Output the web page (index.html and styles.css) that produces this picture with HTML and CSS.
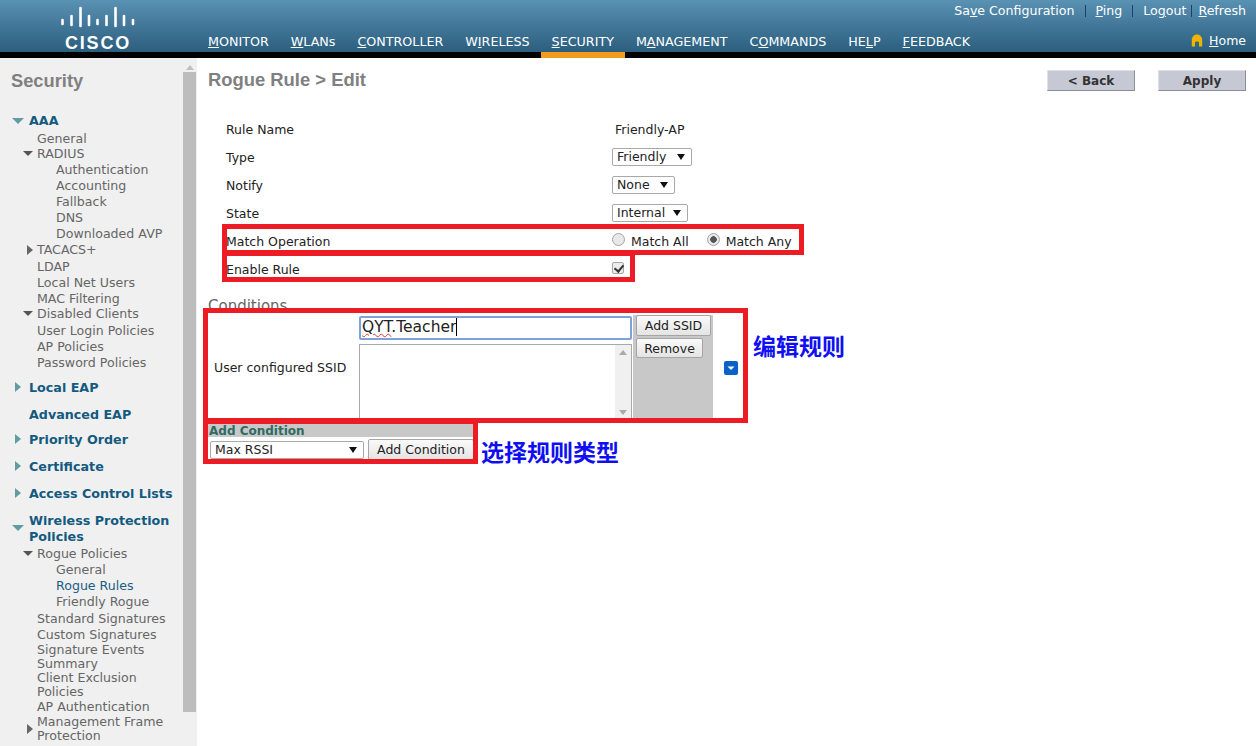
FILE: index.html
```html
<!DOCTYPE html>
<html lang="en">
<head>
    <meta charset="UTF-8">
    <title>Rogue Rule > Edit</title>
    <link rel="stylesheet" href="styles.css">
</head>
<body>

<header class="topbar">
    <div class="logo">
        <svg class="logo-bars" width="74" height="22" viewBox="0 0 74 22">
            <g stroke="#fff" stroke-width="2.6" stroke-linecap="round">
                <line x1="1.5" y1="14" x2="1.5" y2="18"/>
                <line x1="10.5" y1="10" x2="10.5" y2="19"/>
                <line x1="19.5" y1="2" x2="19.5" y2="20"/>
                <line x1="28" y1="10" x2="28" y2="19"/>
                <line x1="36.5" y1="14" x2="36.5" y2="18"/>
                <line x1="45.5" y1="10" x2="45.5" y2="19"/>
                <line x1="54.5" y1="2" x2="54.5" y2="20"/>
                <line x1="63" y1="10" x2="63" y2="19"/>
                <line x1="72" y1="14" x2="72" y2="18"/>
            </g>
        </svg>
        <div class="logo-text">CISCO</div>
    </div>
    <div class="top-right">
        <div class="top-links">
            <a>Sa<u>v</u>e Configuration</a><span class="sep sep-wide"></span>
            <a><u>P</u>ing</a><span class="sep sep-wide"></span>
            <a>Lo<u>g</u>out</a><span class="sep"></span>
            <a><u>R</u>efresh</a>
        </div>
    </div>
    <nav class="menu">
        <a><u>M</u>ONITOR</a>
        <a><u>W</u>LANs</a>
        <a><u>C</u>ONTROLLER</a>
        <a>W<u>I</u>RELESS</a>
        <a class="active"><u>S</u>ECURITY</a>
        <a>M<u>A</u>NAGEMENT</a>
        <a>C<u>O</u>MMANDS</a>
        <a>HE<u>L</u>P</a>
        <a><u>F</u>EEDBACK</a>
    </nav>
    <div class="home">
        <svg width="12" height="13" viewBox="0 0 12 13"><path d="M6 0.5C2.8 0.5 0.8 3 0.8 6V12.5H4V8.5C4 7.2 8 7.2 8 8.5V12.5H11.2V6C11.2 3 9.2 0.5 6 0.5Z" fill="#f0b400"/></svg>
        <a><u>H</u>ome</a>
    </div>
</header>
<div class="blackbar"></div>

<div class="page">
    <aside class="sidebar">
        <div class="side-scroll">
            <div class="scroll-up"></div>
            <div class="scroll-thumb"></div>
        </div>
        <h2 class="side-title">Security</h2>
        <ul class="tree">
            <li class="sec open h20 first">AAA</li>
            <li class="l1 h15">General</li>
            <li class="l1 down h16">RADIUS</li>
            <li class="l2">Authentication</li>
            <li class="l2">Accounting</li>
            <li class="l2">Fallback</li>
            <li class="l2">DNS</li>
            <li class="l2">Downloaded AVP</li>
            <li class="l1 right h17">TACACS+</li>
            <li class="l1">LDAP</li>
            <li class="l1">Local Net Users</li>
            <li class="l1 h15">MAC Filtering</li>
            <li class="l1 down h17">Disabled Clients</li>
            <li class="l1">User Login Policies</li>
            <li class="l1">AP Policies</li>
            <li class="l1">Password Policies</li>
            <li class="sec closed gap-a">Local EAP</li>
            <li class="sec gap-b">Advanced EAP</li>
            <li class="sec closed gap-c">Priority Order</li>
            <li class="sec closed gap-b">Certificate</li>
            <li class="sec closed gap-b">Access Control Lists</li>
            <li class="sec open gap-b wrap">Wireless Protection<br>Policies</li>
            <li class="l1 down">Rogue Policies</li>
            <li class="l2">General</li>
            <li class="l2 current">Rogue Rules</li>
            <li class="l2 h17">Friendly Rogue</li>
            <li class="l1 h16">Standard Signatures</li>
            <li class="l1 h16">Custom Signatures</li>
            <li class="l1 tight">Signature Events<br>Summary</li>
            <li class="l1 tight">Client Exclusion<br>Policies</li>
            <li class="l1 h16">AP Authentication</li>
            <li class="l1 right tight">Management Frame<br>Protection</li>
        </ul>
    </aside>

    <main class="content">
        <div class="title-row">
            <h1>Rogue Rule &gt; Edit</h1>
            <div class="actions">
                <button class="flat-btn">&lt; Back</button>
                <button class="flat-btn">Apply</button>
            </div>
        </div>

        <div class="form">
            <div class="row"><label>Rule Name</label><span class="value-text">Friendly-AP</span></div>
            <div class="row"><label>Type</label><span class="fake-select w80">Friendly</span></div>
            <div class="row"><label>Notify</label><span class="fake-select w63">None</span></div>
            <div class="row"><label>State</label><span class="fake-select w76">Internal</span></div>
            <div class="row">
                <label>Match Operation</label>
                <span class="radios">
                    <i class="radio"></i><span class="radio-label">Match All</span>
                    <i class="radio on"></i><span class="radio-label">Match Any</span>
                </span>
            </div>
            <div class="row"><label>Enable Rule</label><i class="check"></i></div>
        </div>

        <h3 class="cond-title">Conditions</h3>
        <div class="cond">
            <div class="cond-label">User configured SSID</div>
            <div class="cond-inputs">
                <div class="ssid-input"><span class="squiggle">QYT</span>.Teacher<span class="caret"></span></div>
                <div class="ssid-list">
                    <div class="list-scroll"><b class="arrow-up"></b><b class="arrow-down"></b></div>
                </div>
            </div>
            <div class="cond-buttons">
                <button class="btn btn-ssid">Add SSID</button>
                <button class="btn btn-remove">Remove</button>
            </div>
            <div class="cond-extra">
                <svg width="14" height="14" viewBox="0 0 14 14"><rect width="14" height="14" rx="2" fill="#0a62c8"/><path d="M3.5 5.5H10.5L7 9Z" fill="#fff"/></svg>
            </div>
        </div>

        <div class="add-cond">
            <div class="add-head">Add Condition</div>
            <div class="add-body">
                <span class="fake-select w154">Max RSSI</span>
                <button class="btn btn-add">Add Condition</button>
            </div>
        </div>

        <!-- red annotation boxes and notes drawn over the form -->
        <div class="mark mark-match"></div>
        <div class="mark mark-enable"></div>
        <div class="mark mark-cond"></div>
        <div class="mark mark-add"></div>
        <div class="note note-edit">编辑规则</div>
        <div class="note note-type">选择规则类型</div>
    </main>
</div>

</body>
</html>
```

FILE: styles.css
```css
* {
    box-sizing: border-box;
}

html, body {
    height: 100%;
}

body {
    margin: 0;
    height: 746px;
    overflow: hidden;
    background: #fff;
    font-family: "DejaVu Sans", Verdana, sans-serif;
    font-size: 12.5px;
    color: #333;
}

ul {
    list-style: none;
    margin: 0;
    padding: 0;
}

/* top bar */
.topbar {
    position: relative;
    height: 52px;
    background: linear-gradient(180deg, #5a92b4 0%, #44799b 45%, #2c5f7e 100%);
    color: #fff;
}

.blackbar {
    height: 6px;
    background: #000;
}

.logo {
    position: absolute;
    left: 61px;
    top: 6px;
    width: 74px;
    text-align: center;
}

.logo-bars {
    display: block;
}

.logo-text {
    font-family: "Liberation Sans", Arial, sans-serif;
    font-weight: bold;
    font-size: 18px;
    letter-spacing: 1.8px;
    line-height: 18px;
    margin-top: 6px;
}

.top-right {
    position: absolute;
    right: 10px;
    top: 3px;
}

.top-links {
    display: flex;
    align-items: center;
    height: 15px;
    font-size: 12.6px;
}

.sep {
    display: block;
    width: 1px;
    height: 12px;
    margin: 0 6px 0 5px;
    background: #1d3f6e;
}

.sep-wide {
    margin: 0 10px;
}

.menu {
    position: absolute;
    left: 197px;
    bottom: -6px;
    display: flex;
    height: 26px;
    font-size: 12.7px;
}

.menu a {
    padding: 2px 11px 0;
    height: 26px;
    line-height: 15px;
    white-space: nowrap;
}

.menu a.active {
    background: linear-gradient(180deg, transparent 0, transparent 20px, #f39b1f 20px, #f39b1f 26px);
}

.home {
    position: absolute;
    right: 10px;
    top: 33px;
    display: flex;
    align-items: center;
    gap: 6px;
}

/* sidebar */
.page {
    display: flex;
    height: 688px;
}

.sidebar {
    position: relative;
    width: 197px;
    flex: none;
    background: #f0f0f0;
    overflow: hidden;
    color: #666;
    font-size: 12.6px;
}

.side-scroll {
    position: absolute;
    left: 183px;
    top: 0;
    width: 13px;
    height: 100%;
}

.scroll-up {
    width: 0;
    margin: 7px auto 0;
    border: 4px solid transparent;
    border-top: 0;
    border-bottom: 5px solid #c0c0c0;
}

.scroll-thumb {
    height: 640px;
    margin-top: 2px;
    background: #bdbdbd;
}

.side-title {
    margin: 0;
    padding: 12px 0 0 11px;
    height: 53px;
    font-family: "Liberation Sans", Arial, sans-serif;
    font-size: 18.3px;
    font-weight: bold;
    color: #808080;
}

.tree li {
    position: relative;
    line-height: 14px;
    min-height: 16px;
    padding-top: 1px;
}

.tree .h15 { height: 15px; min-height: 15px; }
.tree .h16 { height: 16px; }
.tree .h17 { height: 17px; }
.tree .h20 { height: 20px; }

.tree .tight {
    line-height: 14px;
    padding-top: 0;
}

.l1 { padding-left: 37px; }
.l2 { padding-left: 56px; }

.tree .current { color: #1d5d84; }

.tree .sec {
    padding-left: 29px;
    font-weight: bold;
    font-size: 12.7px;
    color: #135a80;
    line-height: 16px;
}

.tree .first { padding-top: 2px; }
.tree .wrap { padding-bottom: 1px; }

.gap-a { margin-top: 8px; }
.gap-b { margin-top: 10px; }
.gap-c { margin-top: 8px; }

.down::before,
.open::before,
.right::before,
.closed::before {
    content: "";
    position: absolute;
    width: 0;
    height: 0;
}

.down::before {
    left: 23px;
    top: 5px;
    border: 5px solid transparent;
    border-bottom: 0;
    border-top: 5px solid #555;
}

.right::before {
    left: 27px;
    top: 3px;
    border: 5px solid transparent;
    border-right: 0;
    border-left: 6px solid #666;
}

.right.tight::before { top: 9px; }

.open::before {
    left: 12px;
    top: 7px;
    border: 6px solid transparent;
    border-bottom: 0;
    border-top: 6px solid #5f9ea0;
}

.closed::before {
    left: 15px;
    top: 3px;
    border: 5px solid transparent;
    border-right: 0;
    border-left: 6px solid #5f9ea0;
}

.wrap::before { top: 13px; }

/* main */
.content {
    position: relative;
    flex: 1;
}

.title-row {
    display: flex;
    justify-content: space-between;
    height: 57px;
    padding: 11px 10px 0 11px;
}

.title-row h1 {
    margin: 0;
    font-family: "Liberation Sans", Arial, sans-serif;
    font-size: 18.4px;
    line-height: 22px;
    font-weight: bold;
    color: #808080;
}

.actions {
    display: flex;
    gap: 23px;
}

.flat-btn {
    width: 88px;
    height: 21px;
    margin-top: 1px;
    padding: 0;
    background: #c6c8d3;
    border: 1px solid;
    border-color: #e0e1e8 #8b8c94 #8b8c94 #e0e1e8;
    font-family: "DejaVu Sans", Verdana, sans-serif;
    font-size: 12px;
    font-weight: bold;
    color: #333;
}

.form {
    padding-left: 29px;
}

.row {
    display: flex;
    align-items: center;
    height: 28px;
    color: #222;
}

.row label {
    width: 386px;
}

.value-text {
    margin-left: 3px;
}

.fake-select {
    position: relative;
    display: block;
    height: 18px;
    line-height: 16px;
    padding-left: 4px;
    background: #fff;
    border: 1px solid #a9a9a9;
    border-radius: 2px;
    color: #222;
}

.fake-select::after {
    content: "";
    position: absolute;
    right: 6px;
    top: 5px;
    border: 4px solid transparent;
    border-bottom: 0;
    border-top: 6px solid #111;
}

.w80 { width: 80px; }
.w63 { width: 63px; }
.w76 { width: 76px; }
.w154 { width: 154px; }

.radios {
    display: flex;
    align-items: center;
}

.radio {
    display: block;
    width: 13px;
    height: 13px;
    margin-top: -3px;
    border: 1px solid #a5a5a5;
    border-radius: 50%;
    background: #e8e8e8;
}

.radio.on {
    background: radial-gradient(circle, #555 0, #555 3px, #e8e8e8 3.5px);
}

.radio-label {
    margin: 1px 18px 0 6px;
}

.check {
    position: relative;
    display: block;
    width: 12px;
    height: 12px;
    margin-top: -2px;
    border: 1px solid #a5a5a5;
    border-radius: 2px;
    background: #ececec;
}

.check::after {
    content: "";
    position: absolute;
    left: 3px;
    top: 0;
    width: 4px;
    height: 7px;
    border: solid #333;
    border-width: 0 2px 2px 0;
    transform: rotate(40deg);
}

.cond-title {
    margin: 14px 0 0 11px;
    height: 18px;
    font-size: 15px;
    line-height: 19px;
    font-weight: normal;
    color: #666;
}

.cond {
    display: flex;
    height: 105px;
    margin-left: 11px;
}

.cond-label {
    width: 151px;
    padding: 0 0 0 6px;
    align-self: center;
    color: #222;
}

.cond-inputs {
    width: 274px;
    padding-top: 1px;
}

.ssid-input {
    width: 273px;
    height: 24px;
    padding-left: 1px;
    border: 2px solid #7da2dc;
    border-radius: 2px;
    font-size: 15.5px;
    line-height: 19px;
    color: #222;
    white-space: nowrap;
}

.squiggle {
    text-decoration: underline wavy #e33;
    text-decoration-thickness: 1px;
}

.caret {
    display: inline-block;
    width: 1px;
    height: 18px;
    vertical-align: -4px;
    background: #000;
}

.ssid-list {
    position: relative;
    width: 273px;
    height: 76px;
    margin-top: 4px;
    border: 1px solid #a9a9a9;
    border-bottom: 0;
}

.list-scroll {
    position: absolute;
    right: 0;
    top: 0;
    bottom: 0;
    width: 16px;
    background: #f0f0f0;
}

.arrow-up,
.arrow-down {
    position: absolute;
    left: 4px;
    border: 4px solid transparent;
}

.arrow-up {
    top: 5px;
    border-top: 0;
    border-bottom: 5px solid #aaa;
}

.arrow-down {
    bottom: 5px;
    border-bottom: 0;
    border-top: 5px solid #aaa;
}

.cond-buttons {
    width: 80px;
    padding: 0 0 0 3px;
    background: #c8c8c8;
}

.btn {
    display: block;
    padding: 0;
    background: linear-gradient(180deg, #fafafa, #e4e4e4);
    border: 1px solid #a5a5a5;
    border-radius: 2px;
    font-family: "DejaVu Sans", Verdana, sans-serif;
    font-size: 12.5px;
    color: #222;
}

.btn-ssid { width: 75px; height: 21px; }
.btn-remove { width: 67px; height: 20px; margin-top: 2px; }
.btn-add { width: 106px; height: 21px; }

.cond-extra {
    padding: 46px 0 0 11px;
}

.add-cond {
    width: 267px;
    margin: 4px 0 0 11px;
}

.add-head {
    height: 13px;
    padding-left: 1px;
    background: #c8c8c8;
    font-size: 12px;
    font-weight: bold;
    line-height: 14px;
    color: #2f6b62;
}

.add-body {
    display: flex;
    align-items: center;
    gap: 4px;
    height: 25px;
    padding-left: 2px;
}

.mark {
    position: absolute;
    border: 5px solid #ed1c24;
}

.mark-match { left: 25px; top: 166px; width: 582px; height: 31px; }
.mark-enable { left: 25px; top: 193px; width: 413px; height: 31px; }
.mark-cond { left: 6px; top: 250px; width: 545px; height: 115px; }
.mark-add { left: 6px; top: 361px; width: 275px; height: 45px; }

.note {
    position: absolute;
    font-family: "Noto Sans CJK SC", sans-serif;
    font-size: 23px;
    font-weight: bold;
    line-height: 30px;
    color: #0f0ff2;
    white-space: nowrap;
}

.note-edit { left: 556px; top: 272px; }
.note-type { left: 284px; top: 378px; }
```
